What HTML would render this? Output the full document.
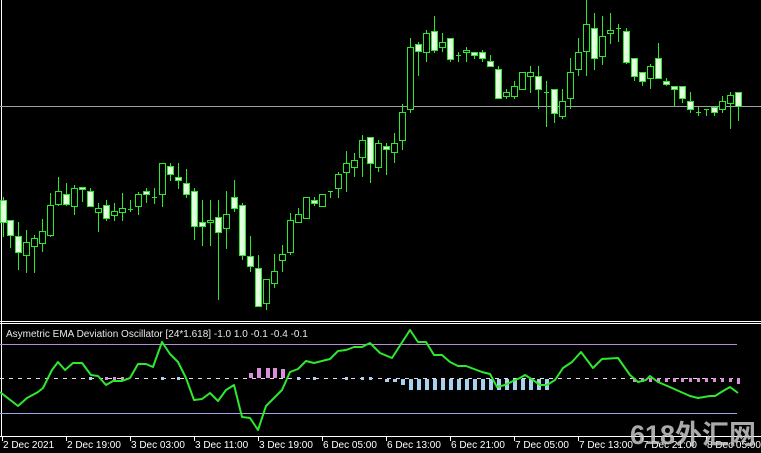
<!DOCTYPE html>
<html><head><meta charset="utf-8"><style>
html,body{margin:0;padding:0;background:#000;width:761px;height:453px;overflow:hidden}
svg{display:block}
text{font-family:"Liberation Sans","Noto Sans CJK SC",sans-serif}
</style></head><body>
<svg id="s" width="761" height="453" xmlns="http://www.w3.org/2000/svg">
<rect width="761" height="453" fill="#000"/>
<line x1="1.5" y1="0" x2="1.5" y2="436" stroke="#fff" stroke-width="1"/>
<line x1="0" y1="106.5" x2="761" y2="106.5" stroke="#a0a0a0" stroke-width="1"/>
<line x1="0" y1="321.5" x2="761" y2="321.5" stroke="#fff"/>
<line x1="0" y1="323.5" x2="761" y2="323.5" stroke="#fff"/>
<line x1="0" y1="436.5" x2="761" y2="436.5" stroke="#fff"/>
<line x1="0" y1="344.5" x2="737" y2="344.5" stroke="#b88ad8"/>
<line x1="0" y1="413.5" x2="737" y2="413.5" stroke="#9aa6e8"/>
<line x1="0" y1="378.5" x2="737" y2="378.5" stroke="#e8d8f0" stroke-dasharray="4,5"/>
<g id="c"></g>
<g id="h"></g>
<polyline fill="none" stroke="#2ee82e" stroke-width="2" stroke-linejoin="round" points="0,392 18,406 27,398 38,392 43,388 52,370 58,362 65,370 73,363 82,363 91,375 98,376 106,385 113,381 122,381 130,378 138,364 146,364 153,367 162,342 170,354 178,362 186,378 194,400 202,399 210,393 218,401 226,390 234,385 242,417 250,418 258,430 266,406 274,398 282,390 290,372 298,369 306,361 314,363 322,361 330,359 338,351 346,350 354,347 362,347 370,343 380,353 392,358 410,330 418,342 426,342 434,355 442,355 450,362 458,366 466,366 474,369 482,372 490,374 497,387 505,385 513,381 520,378 525,375 533,380 540,385 547,385 555,380 563,368 572,362 581,352 593,368 602,359 618,358 630,375 638,382 646,380 650,376 658,382 672,388 690,396 698,398 710,396 715,396 723,391 730,387 738,393"/>
<text x="6" y="337" fill="#e8e8e8" font-size="10">Asymetric EMA Deviation Oscillator [24*1.618] -1.0 1.0 -0.1 -0.4 -0.1</text>
<g id="ax" fill="#fff" font-size="10"></g>
<text x="630" y="444" fill="#c8c8c8" font-size="27" font-weight="bold" opacity="0.85">618外汇网</text>
</svg>
<script>
var C=[
[3,200,222,197,237,1],[10,220,235,223,248,1],[18,236,252,222,270,1],[26,242,255,230,273,0],[34,238,246,235,273,0],[42,231,243,219,252,0],[50,205,235,193,237,0],[58,191,204,177,206,0],[66,194,204,183,206,1],[74,188,206,185,215,0],[82,187,189,187,202,1],[90,191,206,188,207,1],[98,208,212,203,232,0],[106,205,218,200,221,1],[114,211,215,203,221,0],[122,208,212,193,221,0],[130,209,209,200,212,2],[138,194,206,192,215,0],[146,191,194,188,203,1],[154,197,197,188,204,2],[162,163,194,163,207,0],[170,166,174,163,181,1],[178,177,180,163,189,1],[186,183,194,169,198,1],[194,191,226,188,240,1],[202,222,226,200,246,1],[210,220,222,200,246,0],[218,217,232,200,300,1],[226,214,228,191,249,0],[234,197,208,180,212,1],[242,205,255,203,260,1],[250,256,266,236,272,1],[258,268,306,255,307,1],[266,279,303,279,310,0],[274,271,283,254,288,0],[282,254,260,245,272,0],[290,220,252,213,255,0],[298,214,222,208,222,0],[306,197,218,197,218,0],[314,200,203,197,206,1],[322,194,206,194,206,0],[330,191,191,191,198,2],[338,174,188,172,198,0],[346,163,172,151,192,0],[354,160,167,153,177,0],[362,140,157,135,177,0],[370,137,163,137,183,1],[378,143,167,140,172,0],[386,146,149,143,175,1],[394,143,152,133,163,0],[402,112,140,104,150,0],
[410,47,109,38,113,0],[418,44,51,42,76,1],[426,33,52,30,62,0],[434,31,50,16,53,1],[442,42,47,33,52,0],[450,38,59,38,62,1],[458,55,55,52,62,2],[466,50,52,47,62,0],[474,52,55,52,59,1],[482,52,58,50,62,1],[490,61,66,55,66,1],[498,69,98,66,98,1],[506,92,96,89,99,0],[514,86,96,81,99,0],[522,72,89,72,89,0],[530,72,76,66,93,0],[538,76,89,66,109,1],[546,92,92,81,127,2],[554,89,113,89,123,1],[562,101,116,89,119,0],[570,72,98,58,109,0],[578,52,69,38,76,0],[586,24,51,0,76,0],[594,28,58,13,70,1],[602,36,56,16,65,0],[610,30,33,13,44,0],[618,28,28,24,42,2],[626,31,62,28,64,1],[634,58,76,58,81,1],[642,72,81,72,86,1],[650,66,78,64,89,0],[658,58,78,43,78,1],[666,81,84,78,86,1],[674,86,89,86,106,1],[682,86,98,86,103,1],[690,101,109,92,113,1],[698,112,112,107,116,2],[706,109,109,109,116,2],[714,107,112,107,116,1],[722,101,109,96,113,0],[730,95,103,92,129,0],[738,92,106,92,121,1]];
var g='';
C.forEach(function(c){var x=c[0],t=c[1],b=c[2];
g+='<line x1="'+(x+.5)+'" y1="'+c[3]+'" x2="'+(x+.5)+'" y2="'+c[4]+'" stroke="#2ee82e"/>';
if(c[5]==2){g+='<line x1="'+(x-2)+'" y1="'+(t+.5)+'" x2="'+(x+3)+'" y2="'+(t+.5)+'" stroke="#2ee82e"/>';}
else g+='<rect x="'+(x-2.5)+'" y="'+(t+.5)+'" width="6" height="'+Math.max(b-t,2)+'" fill="'+(c[5]?'#e4ffe0':'#000')+'" stroke="#2ee82e"/>';});
document.getElementById('c').innerHTML=g;
var h='';
[[250,373],[258,368],[267,368],[274,368],[282,369]].forEach(function(p){h+='<rect x="'+(p[0]-1)+'" y="'+p[1]+'" width="4" height="'+(378-p[1])+'" fill="#d890d8"/>';});
for(var x=386;x<=548;x+=8){var bt=x<400?382:(x<410?385:390);h+='<rect x="'+(x-1)+'" y="379" width="4" height="'+(bt-379)+'" fill="#a8d0f0"/>';}
for(var x=634;x<=738;x+=8){h+='<rect x="'+(x-1)+'" y="378" width="3" height="'+(x>730?6:4)+'" fill="#d890d8"/>';}
[[90,378],[106,378],[114,378],[122,378],[162,378],[178,378],[298,378],[314,378],[346,378],[362,378],[370,378]].forEach(function(p,i){h+='<rect x="'+(p[0]-1)+'" y="377" width="3" height="3" fill="'+(i<4&&i>0?'#d890d8':'#a8d0f0')+'"/>';});
document.getElementById('h').innerHTML=h;
var L=['2 Dec 2021','2 Dec 19:00','3 Dec 03:00','3 Dec 11:00','3 Dec 19:00','6 Dec 05:00','6 Dec 13:00','6 Dec 21:00','7 Dec 05:00','7 Dec 13:00','7 Dec 21:00','8 Dec 05:00'];
var a='';L.forEach(function(s,i){var x=2+i*64;a+='<line x1="'+(x+.5)+'" y1="436" x2="'+(x+.5)+'" y2="441" stroke="#fff"/><text x="'+(x+1)+'" y="448">'+s+'</text>';});
document.getElementById('ax').innerHTML=a;
</script>
</body></html>
